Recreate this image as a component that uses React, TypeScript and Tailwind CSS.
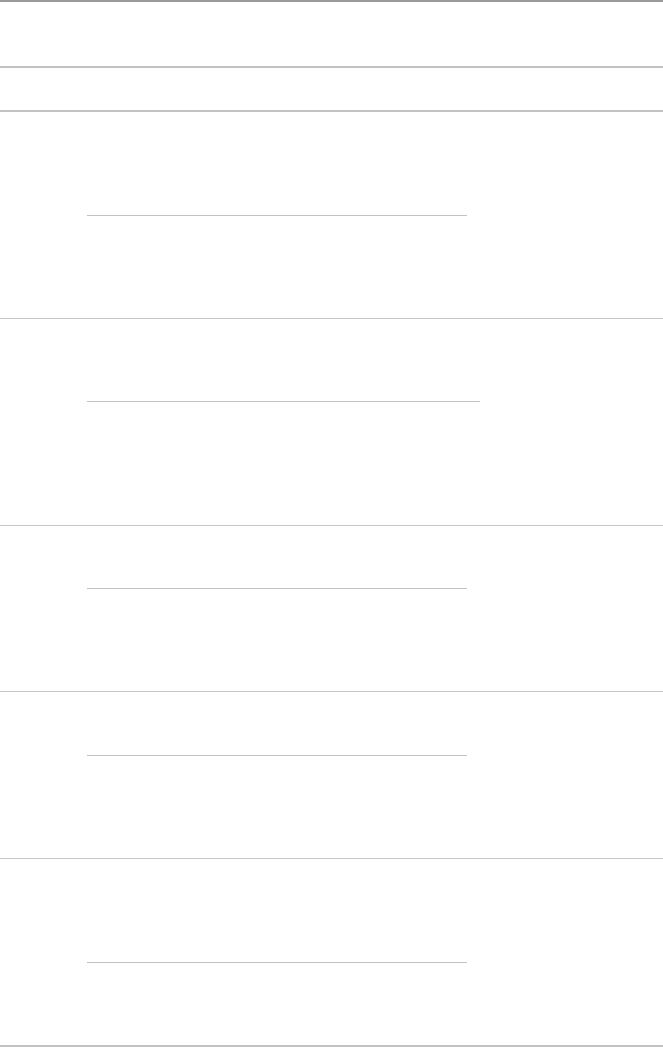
import React from "react";

const rows = [
    { height: "h-[207px]", offset: "pt-[103px]", width: "w-[380px]" },
    { height: "h-[207px]", offset: "pt-[82px]", width: "w-[393px]" },
    { height: "h-[166px]", offset: "pt-[62px]", width: "w-[380px]" },
    { height: "h-[167px]", offset: "pt-[63px]", width: "w-[380px]" },
    { height: "h-[186px]", offset: "pt-[103px]", width: "w-[380px]" },
];

export default function App() {
    return (
        <div className="w-[663px] min-h-[1047px] bg-white font-['Liberation_Sans',sans-serif]">
            <div className="border-t-2 border-[#9a9a9a]">
                {/* header rows */}
                <div className="h-[66px] border-b-2 border-[#c2c2c2]"></div>
                <div className="h-[44px] border-b-2 border-[#c2c2c2]"></div>

                {rows.map((row, i) => (
                    <div
                        key={i}
                        className={`${row.height} ${row.offset} pl-[87px] ${i < rows.length - 1 ? "border-b border-[#c6c6c6]" : ""}`}
                    >
                        <div className={`${row.width} border-b border-[#c2c2c2]`}></div>
                    </div>
                ))}

                <div className="border-b-2 border-[#c2c2c2]"></div>
            </div>
        </div>
    );
}
